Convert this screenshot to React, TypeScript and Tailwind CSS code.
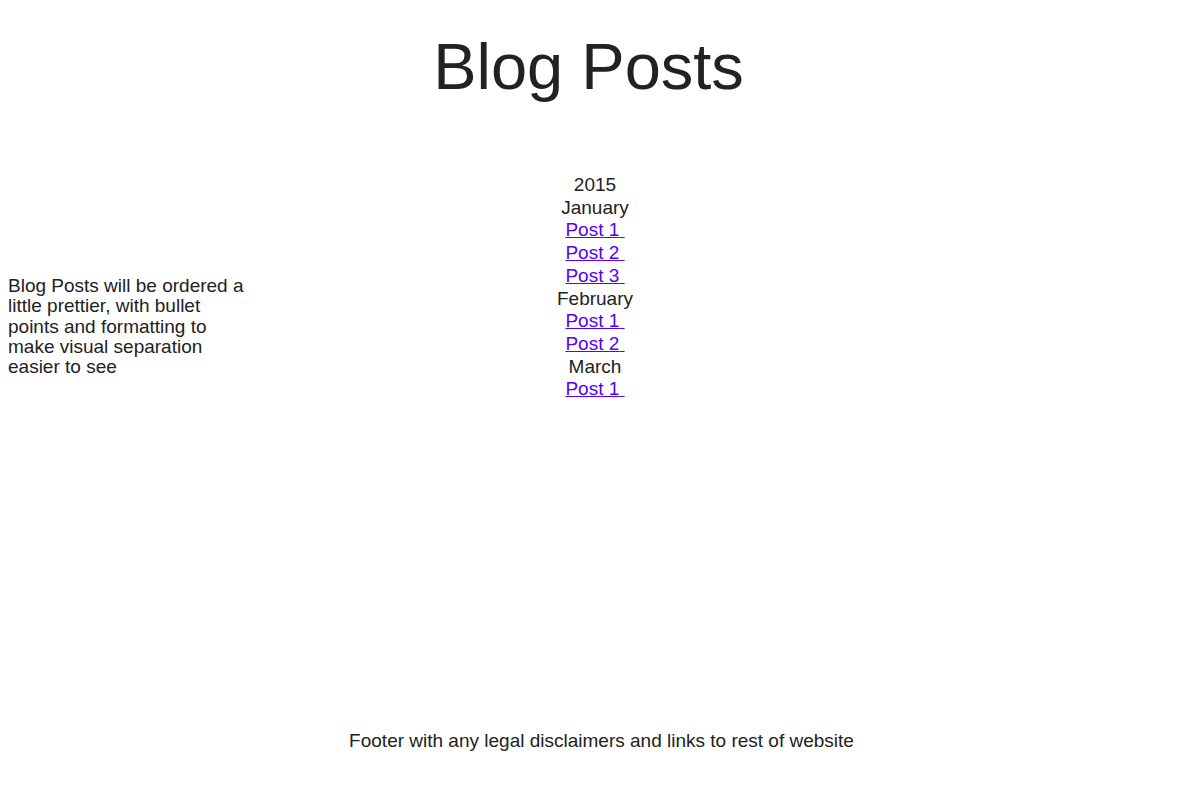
const months = [
  { name: "January", posts: ["Post 1", "Post 2", "Post 3"] },
  { name: "February", posts: ["Post 1", "Post 2"] },
  { name: "March", posts: ["Post 1"] },
];

const App = () => {
  return (
    <div className="flex h-[792px] flex-col bg-white font-['Liberation_Sans',Arial,sans-serif] text-[#222222]">
      <header className="pt-[29px] pr-[26px] text-center">
        <h1 className="text-[65px] leading-[75px]">Blog Posts</h1>
      </header>
      <div className="mt-[70px] grid grid-cols-[248px_694px_1fr]">
        <aside className="pl-[8px] pt-[102px] text-[19px] leading-[20.3px]">
          <p className="w-[240px]">
            Blog Posts will be ordered a little prettier, with bullet points and
            formatting to make visual separation easier to see
          </p>
        </aside>
        <main className="text-center text-[19px] leading-[22.7px]">
          <div>2015</div>
          {months.map((m) => (
            <div key={m.name}>
              <div>{m.name}</div>
              {m.posts.map((p) => (
                <div key={p}>
                  <a href="#" className="text-[#5500ff] underline">
                    {p}&nbsp;
                  </a>
                </div>
              ))}
            </div>
          ))}
        </main>
        <div />
      </div>
      <footer className="mt-auto pb-[37px] text-center text-[19px]">
        Footer with any legal disclaimers and links to rest of website
      </footer>
    </div>
  );
};

export default App;
